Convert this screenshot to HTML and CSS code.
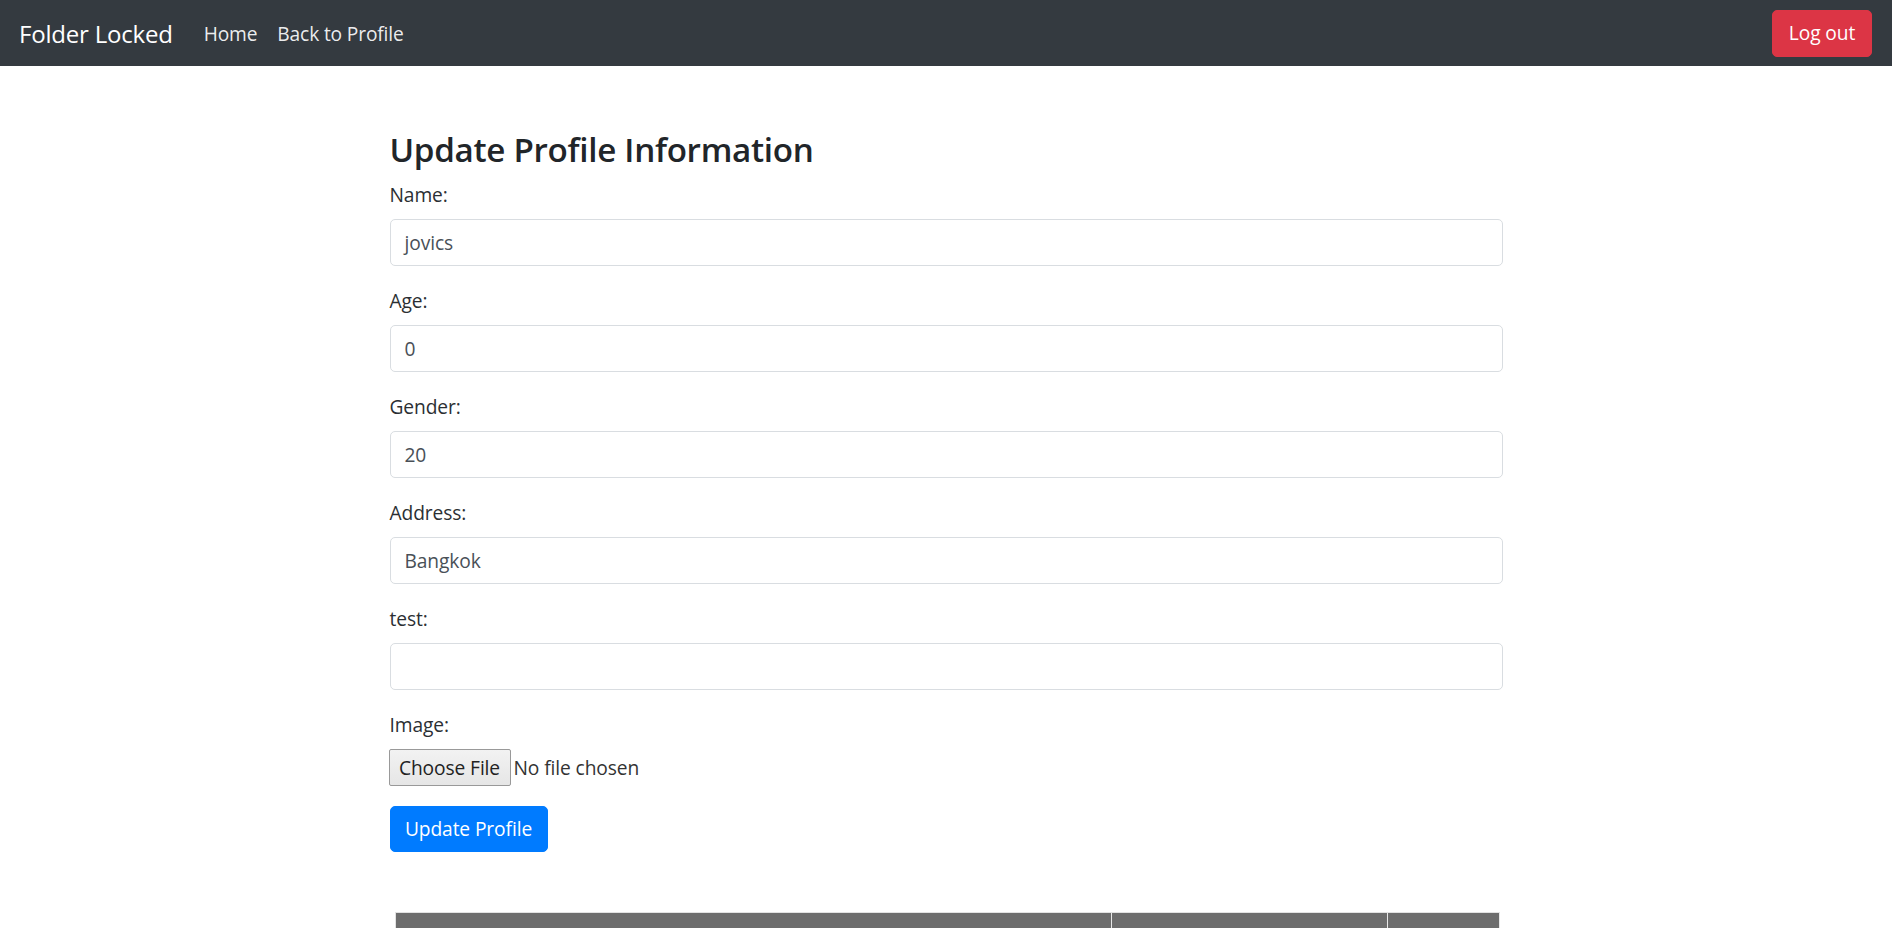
FILE: index.html
```html
<!DOCTYPE html>
<html lang="en">
<head>
<meta charset="utf-8">
<title>Update Profile</title>
<link rel="stylesheet" href="styles.css">
</head>
<body>
<nav class="navbar">
  <div class="nav-left">
    <a class="brand" href="#">Folder Locked</a>
    <a class="nav-link" href="#">Home</a>
    <a class="nav-link" href="#">Back to Profile</a>
  </div>
  <button class="btn btn-danger" type="button">Log out</button>
</nav>
<main class="container">
  <h3 class="title">Update Profile Information</h3>
  <form class="form">
    <div class="form-group">
      <label class="label">Name:</label>
      <div class="input">jovics</div>
    </div>
    <div class="form-group">
      <label class="label">Age:</label>
      <div class="input">0</div>
    </div>
    <div class="form-group">
      <label class="label">Gender:</label>
      <div class="input">20</div>
    </div>
    <div class="form-group">
      <label class="label">Address:</label>
      <div class="input">Bangkok</div>
    </div>
    <div class="form-group">
      <label class="label">test:</label>
      <div class="input"></div>
    </div>
    <div class="form-group">
      <label class="label">Image:</label>
      <div class="file-row">
        <span class="file-btn">Choose File</span>
        <span class="file-name">No file chosen</span>
      </div>
    </div>
    <button class="btn btn-primary" type="button">Update Profile</button>
  </form>
  <div class="table-wrap">
    <div class="thead">
      <div class="th th-1"></div>
      <div class="th th-2"></div>
      <div class="th th-3"></div>
    </div>
  </div>
</main>
</body>
</html>
```
FILE: styles.css
```css
* { box-sizing: border-box; }
html, body { margin: 0; padding: 0; }
body {
  font-family: "Open Sans", "Noto Sans", "Liberation Sans", sans-serif;
  font-size: 19.2px;
  letter-spacing: -0.1px;
  color: #212529;
  background: #fff;
  overflow: hidden;
  height: 928px;
}
.navbar {
  height: 66px;
  background: #343a40;
  display: flex;
  align-items: center;
  justify-content: space-between;
  padding: 0 20px 0 19px;
}
.nav-left { display: flex; align-items: center; }
.brand {
  color: #fff;
  text-decoration: none;
  font-size: 24px;
  letter-spacing: -0.2px;
  margin-right: 21px;
}
.nav-link {
  color: rgba(255,255,255,0.92);
  text-decoration: none;
  font-size: 19.2px;
  padding: 0 10px;
  letter-spacing: -0.15px;
}
.btn {
  font-family: inherit;
  border: 1px solid transparent;
  border-radius: 5px;
  font-size: 19.2px;
  letter-spacing: -0.1px;
  line-height: 28px;
  color: #fff;
  cursor: pointer;
}
.btn-danger { background: #dc3545; border-color: #dc3545; width: 100px; height: 47px; padding: 0; }
.btn-primary { background: #007bff; border-color: #007bff; width: 158px; height: 46px; padding: 0; }
.container {
  width: 1113px;
  margin: 0 auto;
  padding-top: 64px;
}
.title {
  margin: 0 0 10px;
  font-size: 33.2px;
  font-weight: 600;
  line-height: 40px;
  letter-spacing: -0.3px;
}
.form { display: flex; flex-direction: column; align-items: flex-start; }
.form-group { margin-bottom: 20px; width: 100%; }
.label {
  display: block;
  line-height: 29px;
  margin-bottom: 10px;
  color: #2b2f33;
}
.input {
  height: 47px;
  border: 1px solid #d9dde1;
  border-radius: 5px;
  padding: 0 14px;
  line-height: 45px;
  color: #495057;
}
.file-row { display: flex; align-items: center; height: 37px; }
.file-btn {
  height: 37px;
  width: 122px;
  display: flex;
  align-items: center;
  justify-content: center;
  background: linear-gradient(#f2f2f2, #e6e6e6);
  border: 1px solid #999;
  border-radius: 2px;
  color: #222;
  margin-left: -1px;
}
.file-name { margin-left: 3px; color: #333; }
.table-wrap { margin-top: 60px; padding: 0 3px 0 5px; }
.thead {
  display: flex;
  height: 20px;
  border-top: 1px solid #e2e2e2;
  border-left: 1px solid #e2e2e2;
}
.th { background: #6d6d6d; border-right: 1px solid #e8e8e8; }
.th-1 { width: 716px; }
.th-2 { width: 276px; }
.th-3 { flex: 1; }
```
